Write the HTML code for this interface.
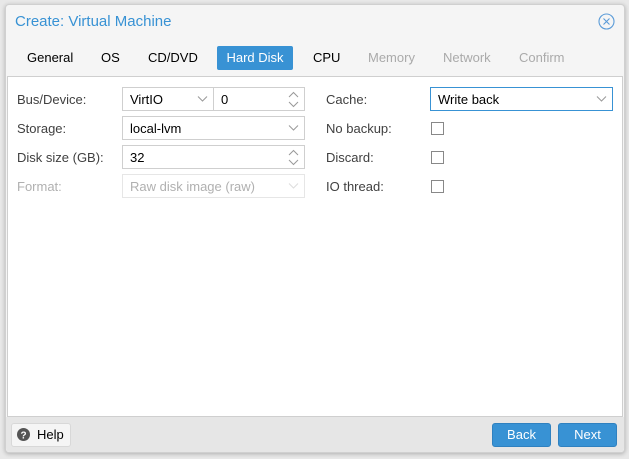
<!DOCTYPE html>
<html><head><style>
*{box-sizing:border-box}
body{margin:0;width:629px;height:459px;background:#e8e8e8;font-family:"Liberation Sans",sans-serif;font-size:13px;position:relative;overflow:hidden}
.win{position:absolute;left:5px;top:4px;width:620px;height:449px;background:#f5f5f5;border:1px solid #d0d0d0;border-radius:4px;box-shadow:0 1px 4px rgba(0,0,0,.25)}
.a{position:absolute}
.title{left:15px;top:13px;color:#3892d4;font-size:15px}
.tab{top:46px;height:24px;line-height:23px;color:#000}
.dis{color:#aaa}
.body{left:7px;top:76px;width:616px;height:341px;background:#fff;border:1px solid #cfcfcf}
.lbl{color:#404040}
.f{position:absolute;height:24px;border:1px solid #cfcfcf;background:#fff;padding-left:7px;line-height:23px;color:#000}
.chev{position:absolute;right:5px;top:7px}
.spin{position:absolute;right:5px;top:3px}
.cb{position:absolute;width:13px;height:13px;border:1px solid #888;background:#fff}
.btn{position:absolute;top:423px;height:24px;border-radius:3px;line-height:22px;text-align:center}
</style></head><body>
<div class="win"></div>
<div class="a title">Create: Virtual Machine</div>
<svg class="a" style="left:598px;top:13px" width="17" height="17" viewBox="0 0 17 17"><circle cx="8.5" cy="8.5" r="7.5" fill="none" stroke="#5a9bd8" stroke-width="1.1"/><path d="M5.5 5.5L11.5 11.5M11.5 5.5L5.5 11.5" stroke="#5a9bd8" stroke-width="1.1"/></svg>
<div class="a tab" style="left:27px">General</div>
<div class="a tab" style="left:101px">OS</div>
<div class="a tab" style="left:148px">CD/DVD</div>
<div class="a tab" style="left:217px;width:76px;background:#3892d4;color:#fff;border-radius:2px;text-align:center">Hard Disk</div>
<div class="a tab" style="left:313px">CPU</div>
<div class="a tab dis" style="left:368px">Memory</div>
<div class="a tab dis" style="left:443px">Network</div>
<div class="a tab dis" style="left:519px">Confirm</div>
<div class="a body"></div>

<div class="a lbl" style="left:17px;top:92px">Bus/Device:</div>
<div class="f" style="left:122px;top:87px;width:92px">VirtIO<svg class="chev" width="11" height="8"><path d="M1 1.5L5.5 6L10 1.5" fill="none" stroke="#999"/></svg></div>
<div class="f" style="left:213px;top:87px;width:92px">0<svg class="spin" width="11" height="17"><path d="M1 6L5.5 1.5L10 6M1 11L5.5 15.5L10 11" fill="none" stroke="#999"/></svg></div>
<div class="a lbl" style="left:17px;top:121px">Storage:</div>
<div class="f" style="left:122px;top:116px;width:183px">local-lvm<svg class="chev" width="11" height="8"><path d="M1 1.5L5.5 6L10 1.5" fill="none" stroke="#999"/></svg></div>
<div class="a lbl" style="left:17px;top:150px">Disk size (GB):</div>
<div class="f" style="left:122px;top:145px;width:183px">32<svg class="spin" width="11" height="17"><path d="M1 6L5.5 1.5L10 6M1 11L5.5 15.5L10 11" fill="none" stroke="#999"/></svg></div>
<div class="a" style="left:17px;top:179px;color:#b0b0b0">Format:</div>
<div class="f" style="left:122px;top:174px;width:183px;color:#b0b0b0;border-color:#e6e6e6">Raw disk image (raw)<svg class="chev" width="11" height="8"><path d="M1 1.5L5.5 6L10 1.5" fill="none" stroke="#ddd"/></svg></div>

<div class="a lbl" style="left:326px;top:92px">Cache:</div>
<div class="f" style="left:430px;top:87px;width:183px;border-color:#3892d4">Write back<svg class="chev" width="11" height="8"><path d="M1 1.5L5.5 6L10 1.5" fill="none" stroke="#999"/></svg></div>
<div class="a lbl" style="left:326px;top:121px">No backup:</div>
<div class="cb" style="left:431px;top:122px"></div>
<div class="a lbl" style="left:326px;top:150px">Discard:</div>
<div class="cb" style="left:431px;top:151px"></div>
<div class="a lbl" style="left:326px;top:179px">IO thread:</div>
<div class="cb" style="left:431px;top:180px"></div>

<div class="a" style="left:6px;top:417px;width:618px;height:35px;background:#e6e6e6;border-radius:0 0 4px 4px"></div>
<div class="btn" style="left:11px;width:60px;background:#f5f5f5;border:1px solid #d8d8d8;text-align:left;padding-left:25px;color:#000">Help</div>
<svg class="a" style="left:17px;top:428px" width="13" height="13" viewBox="0 0 13 13"><circle cx="6.5" cy="6.5" r="6.5" fill="#555"/><text x="6.5" y="10.5" font-size="10" font-weight="bold" fill="#fff" text-anchor="middle" font-family="Liberation Sans">?</text></svg>
<div class="btn" style="left:492px;width:59px;background:#3892d4;border:1px solid #2f81c0;color:#fff">Back</div>
<div class="btn" style="left:558px;width:59px;background:#3892d4;border:1px solid #2f81c0;color:#fff">Next</div>
</body></html>
